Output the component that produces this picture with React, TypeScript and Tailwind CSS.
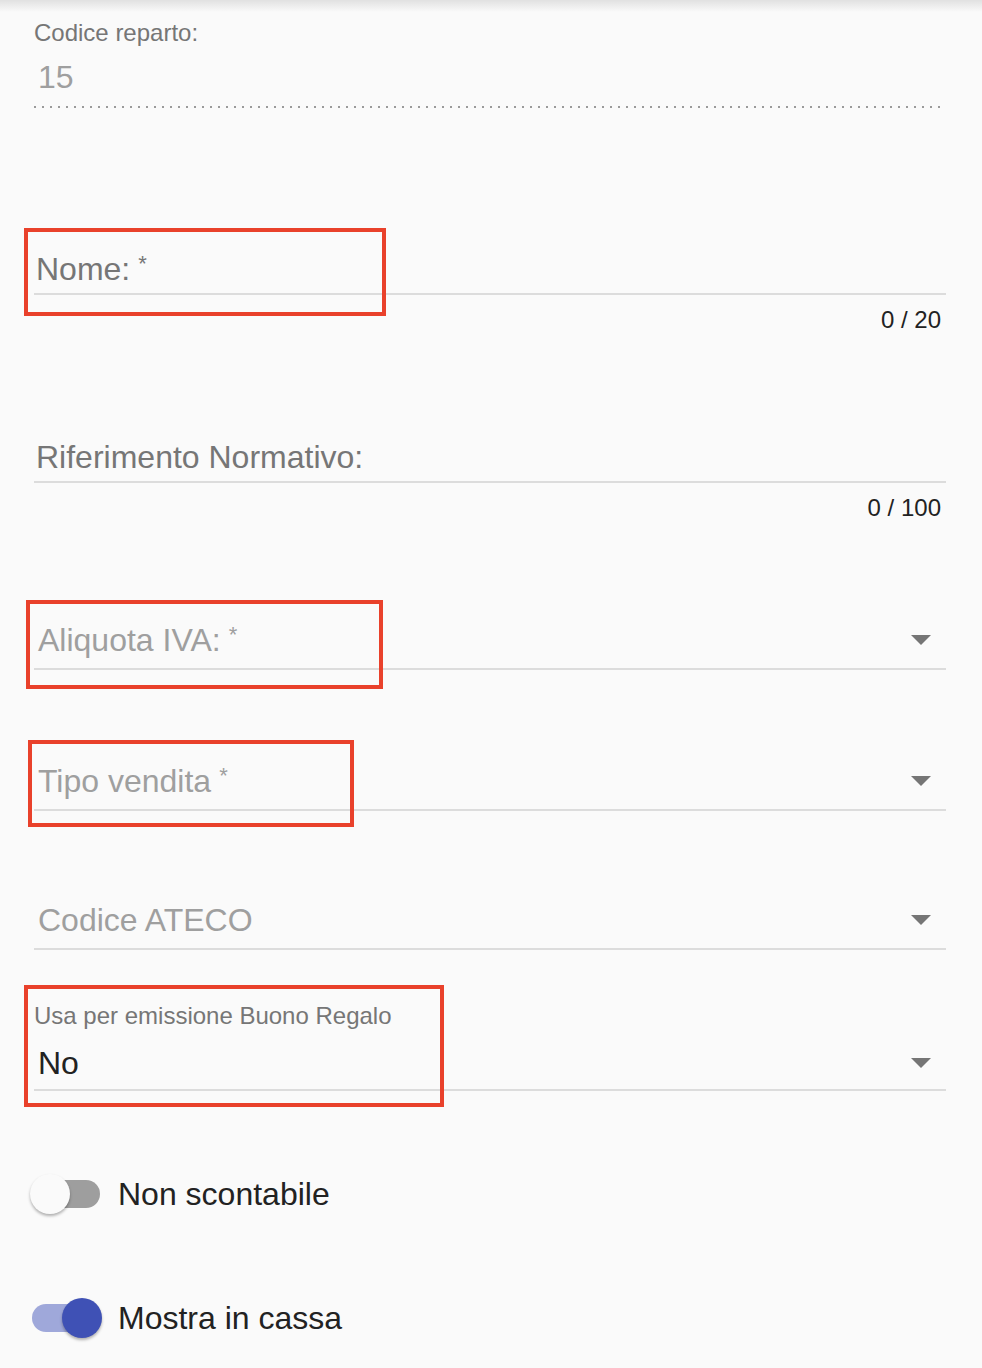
import React from "react";

const font = "font-['Liberation_Sans','Helvetica_Neue',Arial,sans-serif]";

function RedBox({ className }: { className: string }) {
  return (
    <div
      className={`pointer-events-none absolute border-4 border-[#e9412b] ${className}`}
    />
  );
}

function Arrow() {
  return (
    <svg width="20" height="10" viewBox="0 0 20 10" className="mr-[15px] shrink-0">
      <path d="M0 0h20L10 10z" fill="#757575" />
    </svg>
  );
}

function Label({ text, required }: { text: string; required?: boolean }) {
  return (
    <>
      {text}
      {required && <span className="ml-[8px] align-top text-[22px] leading-[28px]">*</span>}
    </>
  );
}

function TextField({
  label,
  required,
  counter,
  boxClass,
  className,
}: {
  label: string;
  required?: boolean;
  counter: string;
  boxClass?: string;
  className: string;
}) {
  return (
    <div className={`relative ${className}`}>
      <div className="border-b-2 border-[#dcdcdc] pb-[5px]">
        <div className="pl-[2px] text-[32px] leading-[38px] text-[#767676]">
          <Label text={label} required={required} />
        </div>
      </div>
      <div className="mt-[11px] pr-[5px] text-right text-[24px] leading-[28px] text-[#222]">
        {counter}
      </div>
      {boxClass && <RedBox className={boxClass} />}
    </div>
  );
}

function SelectField({
  label,
  required,
  boxClass,
  className,
}: {
  label: string;
  required?: boolean;
  boxClass?: string;
  className: string;
}) {
  return (
    <div className={`relative ${className}`}>
      <div className="flex items-center border-b-2 border-[#dcdcdc] pb-[9px]">
        <div className="flex-1 pl-[4px] text-[32px] leading-[38px] text-[#9f9f9f]">
          <Label text={label} required={required} />
        </div>
        <Arrow />
      </div>
      {boxClass && <RedBox className={boxClass} />}
    </div>
  );
}

function Toggle({ on, label, className }: { on: boolean; label: string; className: string }) {
  return (
    <div className={`-ml-[4px] flex items-center gap-[16px] ${className}`}>
      <div className="relative flex h-10 w-[72px] items-center">
        <div
          className={`ml-[2px] h-7 w-[68px] rounded-full ${on ? "bg-[#9fa8da]" : "bg-[#9e9e9e]"}`}
        />
        <div
          className={`absolute top-0 size-10 rounded-full shadow-[0_2px_3px_rgba(0,0,0,0.3)] ${
            on ? "left-[32px] bg-[#3f51b5]" : "left-0 bg-[#fafafa]"
          }`}
        />
      </div>
      <span className="text-[32px] leading-[38px] text-[#222]">{label}</span>
    </div>
  );
}

export default function App() {
  return (
    <div className={`min-h-[1368px] bg-[#fafafa] ${font}`}>
      <div className="h-3 bg-gradient-to-b from-[#e1e1e1] to-[#fafafa]" />
      <div className="pl-[34px] pr-[36px]">
        {/* Codice reparto (read only) */}
        <div className="mt-[7px] text-[24px] leading-[28px] text-[#767676]">Codice reparto:</div>
        <div className="mt-[11px] pl-[4px] text-[32px] leading-[38px] text-[#9f9f9f]">15</div>
        <div className="mt-[10px] mr-[6px] h-[2px] bg-[linear-gradient(to_right,#9a9a9a_25%,transparent_25%)] bg-[length:8px_2px] bg-repeat-x" />

        <TextField
          label="Nome:"
          required
          counter="0 / 20"
          className="mt-[142px]"
          boxClass="-left-[10px] -top-[22px] h-[88px] w-[362px]"
        />
        <TextField label="Riferimento Normativo:" counter="0 / 100" className="mt-[104px]" />

        <SelectField
          label="Aliquota IVA:"
          required
          className="mt-[99px]"
          boxClass="-left-[8px] -top-[21px] h-[89px] w-[357px]"
        />
        <SelectField
          label="Tipo vendita"
          required
          className="mt-[92px]"
          boxClass="-left-[6px] -top-[22px] h-[87px] w-[326px]"
        />
        <SelectField label="Codice ATECO" className="mt-[90px]" />

        {/* Buono Regalo */}
        <div className="relative mt-[52px]">
          <div className="text-[24px] leading-[28px] text-[#767676]">Usa per emissione Buono Regalo</div>
          <div className="mt-[14px] flex items-center border-b-2 border-[#dcdcdc] pb-[7px]">
            <div className="flex-1 pl-[4px] text-[32px] leading-[38px] text-[#222]">No</div>
            <Arrow />
          </div>
          <RedBox className="-left-[10px] -top-[17px] h-[122px] w-[420px]" />
        </div>

        <Toggle on={false} label="Non scontabile" className="mt-[83px]" />
        <Toggle on={true} label="Mostra in cassa" className="mt-[84px]" />
      </div>
    </div>
  );
}
